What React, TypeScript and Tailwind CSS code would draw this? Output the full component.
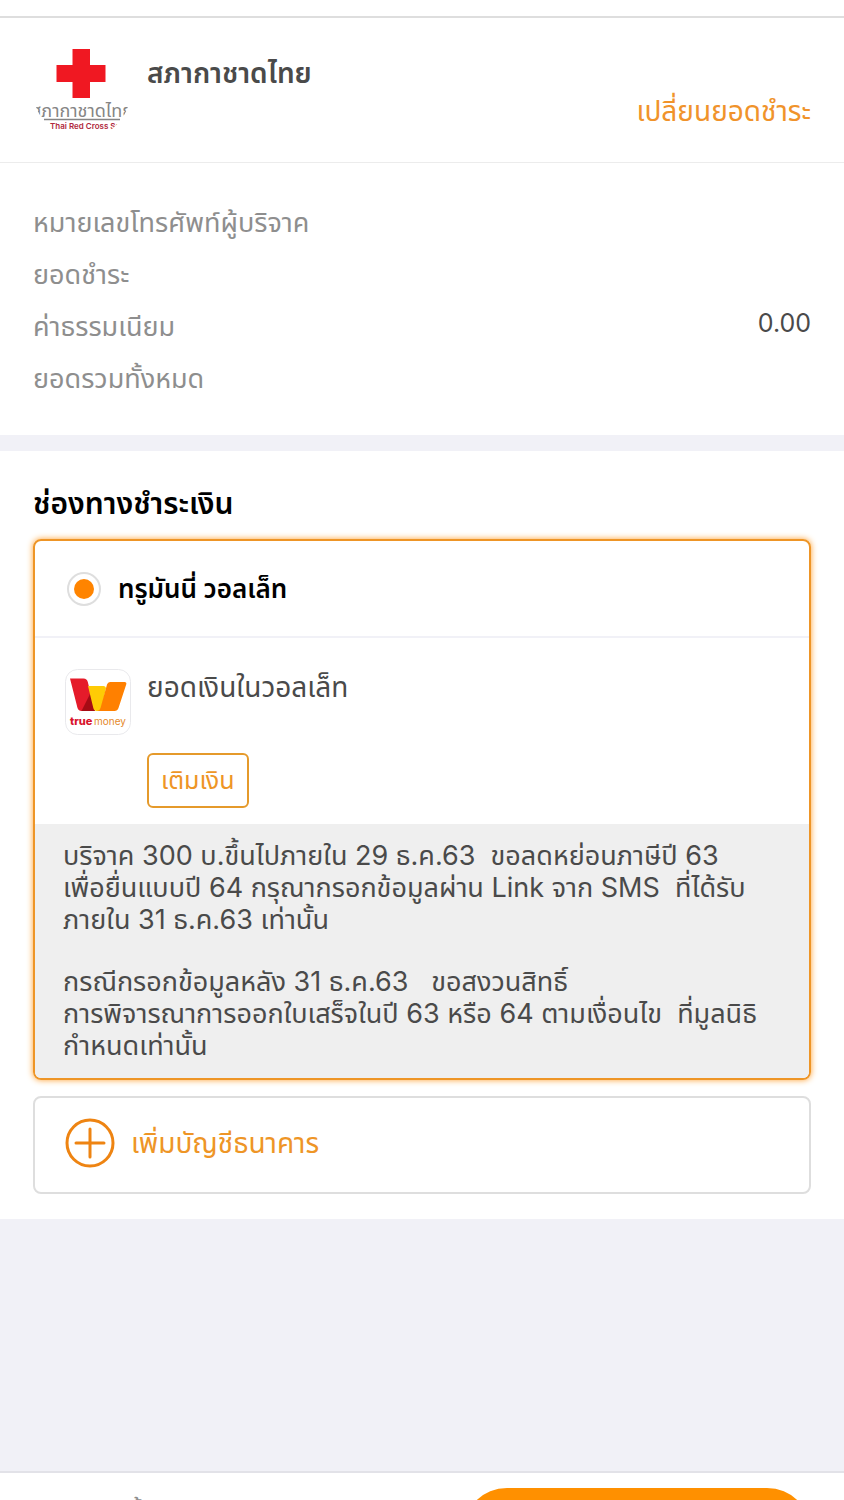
import { useState } from 'react'

interface DetailRow {
  label: string
  value?: string
}

const DETAILS: DetailRow[] = [
  { label: 'หมายเลขโทรศัพท์ผู้บริจาค' },
  { label: 'ยอดชำระ' },
  { label: 'ค่าธรรมเนียม', value: '0.00' },
  { label: 'ยอดรวมทั้งหมด' },
]

const NOTES = [
  [
    'บริจาค 300 บ.ขึ้นไปภายใน 29 ธ.ค.63  ขอลดหย่อนภาษีปี 63',
    'เพื่อยื่นแบบปี 64 กรุณากรอกข้อมูลผ่าน Link จาก SMS  ที่ได้รับ',
    'ภายใน 31 ธ.ค.63 เท่านั้น',
  ],
  [
    'กรณีกรอกข้อมูลหลัง 31 ธ.ค.63   ขอสงวนสิทธิ์',
    'การพิจารณาการออกใบเสร็จในปี 63 หรือ 64 ตามเงื่อนไข  ที่มูลนิธิ',
    'กำหนดเท่านั้น',
  ],
]

function RedCrossLogo() {
  return (
    <svg viewBox="0 0 98 98" className="size-[98px] shrink-0" role="img" aria-label="Thai Red Cross Society">
      <defs>
        <clipPath id="logo-circle">
          <circle cx="49" cy="49" r="49" />
        </clipPath>
      </defs>
      <g clipPath="url(#logo-circle)">
        <path d="M39.500 8h17.500v16h15.500v17H57v16H39.500V41h-16V24h16z" fill="#f01822" />
        <text x="49" y="76" textAnchor="middle" fontSize="18" fill="#858585">
          สภากาชาดไทย
        </text>
        <path d="M11 78.500h76" stroke="#858585" strokeWidth="1.500" />
        <text x="17" y="88" fontSize="8" fontWeight="600" fill="#b0283c">
          Thai Red Cross Society
        </text>
      </g>
    </svg>
  )
}

function TrueMoneyLogo() {
  return (
    <svg viewBox="0 0 66 66" className="size-[66px] shrink-0" role="img" aria-label="truemoney">
      <rect x="0.500" y="0.500" width="65" height="65" rx="12" fill="#fff" stroke="#e9e9ec" />
      <path d="M5 9.500h13.500q3.500 0 4.300 3.500L30 42H16.500q-3 0-4-3z" fill="#e51b2a" />
      <path d="M25.500 24L30 42H16.500z" fill="#a50b14" />
      <path d="M23 17h15.500q2 0 2.500 2L36 42h-4q-3 0-3.700-3z" fill="#ffcb05" />
      <path d="M45 13h14.500q2.500 0 1.700 2.500L53.500 39q-1 3-4 3H32.500q2 0 3-3l6.500-23.500q.8-2.500 3-2.500z" fill="#ff8000" />
      <text x="5" y="56" fontSize="11" fontWeight="800" fill="#d8142c">
        true
      </text>
      <text x="29" y="56" fontSize="10" fill="#e58a2c">
        money
      </text>
    </svg>
  )
}

export default function App() {
  const [method, setMethod] = useState('wallet')

  return (
    <div className="flex h-screen flex-col overflow-hidden bg-[#f1f1f7] font-['Inter','Noto_Sans_Thai',sans-serif] text-[27px] text-[#4a4a4a]">
      <header className="border-b border-[#ececec] bg-white pt-4">
        <div className="flex gap-4 border-t-2 border-[#dedede] px-[33px] pt-[23px] pb-[23px]">
          <RedCrossLogo />
          <h1 className="pt-3 text-[28px] leading-10 font-semibold">สภากาชาดไทย</h1>
          <a href="#amount" className="ml-auto self-end pb-2 text-[28px] leading-10 text-[#f0932b]">
            เปลี่ยนยอดชำระ
          </a>
        </div>
      </header>

      <dl className="bg-white px-[33px] pt-[34px] pb-[30px] text-[#8e8e8e]">
        {DETAILS.map((row) => (
          <div key={row.label} className="flex justify-between leading-[52px]">
            <dt>{row.label}</dt>
            <dd className="text-[25px] leading-[44px] text-[#4a4a4a]">{row.value}</dd>
          </div>
        ))}
      </dl>

      <section className="mt-4 bg-white px-[33px] pt-8 pb-[25px]">
        <h2 className="mb-4 text-[30px] leading-10 font-semibold text-black">ช่องทางชำระเงิน</h2>

        <div className="overflow-hidden rounded-lg border-2 border-[#ee9526] shadow-[0_0_6px_#ff9f2e]">
          <label className="flex h-[95px] items-center gap-[17px] pl-8 text-[26px] font-semibold text-black">
            <input
              type="radio"
              name="method"
              value="wallet"
              checked={method === 'wallet'}
              onChange={(e) => setMethod(e.target.value)}
              className="size-[34px] appearance-none rounded-full border-2 border-[#dedede] p-[5px] checked:bg-[#ff8400] checked:bg-clip-content"
            />
            ทรูมันนี่ วอลเล็ท
          </label>
          <div className="flex gap-4 border-t-2 border-[#f1f1f7] pt-[31px] pb-4 pl-[30px]">
            <TrueMoneyLogo />
            <div>
              <p className="text-[28px] leading-9">ยอดเงินในวอลเล็ท</p>
              <button
                type="button"
                className="mt-12 h-[55px] rounded-md border-2 border-[#e59a2b] px-3 text-[25px] text-[#ee9526]"
              >
                เติมเงิน
              </button>
            </div>
          </div>
          <div className="flex flex-col gap-[30px] bg-[#efefef] px-7 py-4 leading-8">
            {NOTES.map((lines) => (
              <p key={lines[0]} className="whitespace-pre-wrap">
                {lines.join('\n')}
              </p>
            ))}
          </div>
        </div>

        <button
          type="button"
          className="mt-4 flex h-[98px] w-full items-center gap-4 rounded-lg border-2 border-[#dedede] pb-1 pl-[30px] text-[28px] text-[#ee9526]"
        >
          <svg viewBox="0 0 50 50" className="size-[50px]" fill="none" stroke="#ee8412" strokeWidth="3">
            <circle cx="25" cy="25" r="23" />
            <path d="M11 25h28M25 11v28" strokeLinecap="round" />
          </svg>
          เพิ่มบัญชีธนาคาร
        </button>
      </section>

      <footer className="mt-auto flex h-[29px] shrink-0 justify-between overflow-hidden border-t-2 border-[#e2e2e8] bg-white px-[33px]">
        <p className="pt-5 text-[#8e8e8e]">ยอดรวมทั้งหมด</p>
        <button type="button" aria-label="ชำระเงิน" className="mt-[15px] h-[88px] w-[348px] rounded-full bg-[#ff9000]" />
      </footer>
    </div>
  )
}
